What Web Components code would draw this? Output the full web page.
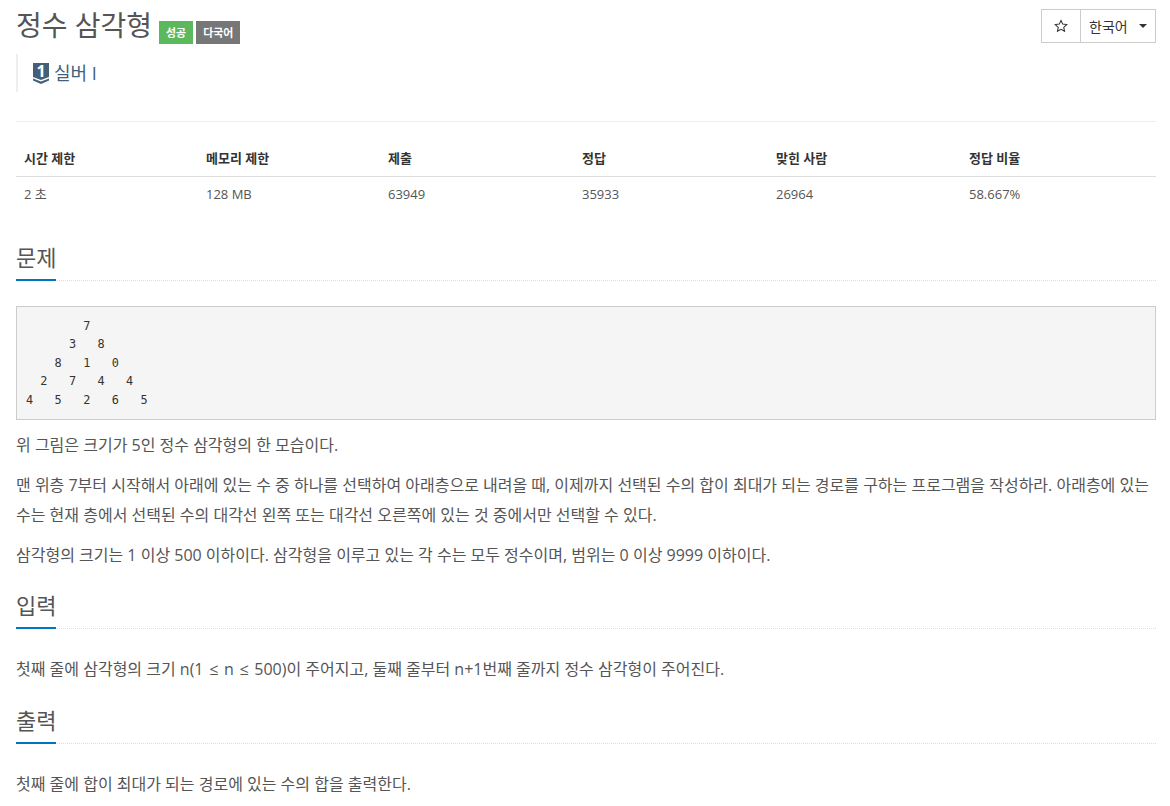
<!DOCTYPE html>
<html lang="ko">
<head>
<meta charset="utf-8">
<title>정수 삼각형</title>
<style>
html, body { margin: 0; background: #fff; }
body { font-family: "Open Sans", "Noto Sans CJK KR", sans-serif; color: #555; font-size: 14px; overflow: hidden; }
main { display: block; padding: 0 14px 0 16px; }
.expr { word-spacing: 1.5px; }
</style>
</head>
<body>
<main>
    <problem-header title-text="정수 삼각형" tier="실버 I"></problem-header>
    <stat-table></stat-table>
    <problem-section heading="문제">
        <triangle-box></triangle-box>
        <p>위 그림은 크기가 5인 정수 삼각형의 한 모습이다.</p>
        <p>맨 위층 7부터 시작해서 아래에 있는 수 중 하나를 선택하여 아래층으로 내려올 때, 이제까지 선택된 수의 합이 최대가 되는 경로를 구하는 프로그램을 작성하라. 아래층에 있는 수는 현재 층에서 선택된 수의 대각선 왼쪽 또는 대각선 오른쪽에 있는 것 중에서만 선택할 수 있다.</p>
        <p>삼각형의 크기는 1 이상 500 이하이다. 삼각형을 이루고 있는 각 수는 모두 정수이며, 범위는 0 이상 9999 이하이다.</p>
    </problem-section>
    <problem-section heading="입력">
        <p>첫째 줄에 삼각형의 크기 <span class="expr">n(1 ≤ n ≤ 500)</span>이 주어지고, 둘째 줄부터 n+1번째 줄까지 정수 삼각형이 주어진다.</p>
    </problem-section>
    <problem-section heading="출력">
        <p>첫째 줄에 합이 최대가 되는 경로에 있는 수의 합을 출력한다.</p>
    </problem-section>
</main>

<script>
class ProblemHeader extends HTMLElement {
    constructor() {
        super();
        this.sr = this.attachShadow({ mode: "open" });
    }

    connectedCallback() {
        this.sr.innerHTML = `<style>
:host { display: block; border-bottom: 1px solid #eee; height: 121px; }
.top { display: flex; justify-content: space-between; align-items: flex-start; height: 54px; }
.title { display: flex; align-items: flex-start; gap: 7px; padding-top: 7px; }
h1 { margin: 0; font-size: 28px; line-height: 36px; font-weight: 400; color: #555; }
.labels { display: flex; gap: 3px; padding-top: 14px; }
.tier { display: flex; align-items: center; gap: 5px; height: 38px; border-left: 2px solid #eee; padding-left: 15px; font-size: 18px; line-height: 36px; color: #435f7a; }
</style>
<div class="top">
    <div class="title"><h1>${this.getAttribute("title-text")}</h1>
        <div class="labels"><state-label kind="ok">성공</state-label><state-label>다국어</state-label></div>
    </div>
    <lang-select></lang-select>
</div>
<div class="tier"><tier-badge></tier-badge><span>${this.getAttribute("tier")}</span></div>`;
    }
}

class StateLabel extends HTMLElement {
    constructor() {
        super();
        this.sr = this.attachShadow({ mode: "open" });
        this.sr.innerHTML = `<style>
:host { display: block; background: #777; color: #fff; font-size: 10.9px; font-weight: 700; line-height: 23px; height: 23px; padding: 0 7px; }
:host([kind="ok"]) { background: #5cb85c; }
</style><slot></slot>`;
    }
}

class TierBadge extends HTMLElement {
    constructor() {
        super();
        this.sr = this.attachShadow({ mode: "open" });
        this.sr.innerHTML = `<style>
:host { display: block; width: 16px; height: 21px; position: relative; }
svg { display: block; }
span { position: absolute; left: 0; right: 0; top: 0; height: 16px; text-align: center; font: 700 16px/16px "Open Sans", sans-serif; color: #fff; }
</style>
<svg width="16" height="21" viewBox="0 0 16 21">
    <path d="M0 0H16V14L8 17L0 14Z" fill="#435f7a"/>
    <path d="M0 15.5L8 18.5L16 15.5V17.5L8 21L0 17.5Z" fill="#435f7a"/>
</svg>
<span>1</span>`;
    }
}

class LangSelect extends HTMLElement {
    constructor() {
        super();
        this.sr = this.attachShadow({ mode: "open" });
        this.sr.innerHTML = `<style>
:host { display: flex; height: 32px; margin-top: 9px; border: 1px solid #ccc; color: #333; font-size: 14px; }
.star { width: 38px; border-right: 1px solid #ccc; display: flex; align-items: center; justify-content: center; }
.lang { width: 74px; display: flex; align-items: center; justify-content: space-between; padding: 0 8px; box-sizing: border-box; }
.caret { width: 0; height: 0; border-top: 4px solid #333; border-left: 4px solid transparent; border-right: 4px solid transparent; }
</style>
<div class="star">
    <svg width="14" height="14" viewBox="0 0 24 24" fill="none" stroke="#333" stroke-width="1.8"><path d="M12 2.5l2.9 6.3 6.9.8-5.1 4.7 1.4 6.8-6.1-3.4-6.1 3.4 1.4-6.8-5.1-4.7 6.9-.8z"/></svg>
</div>
<div class="lang"><span>한국어</span><span class="caret"></span></div>`;
    }
}

class StatTable extends HTMLElement {
    constructor() {
        super();
        this.sr = this.attachShadow({ mode: "open" });
        this.cols = [
            ["시간 제한", "2 초"],
            ["메모리 제한", "128 MB"],
            ["제출", "63949"],
            ["정답", "35933"],
            ["맞힌 사람", "26964"],
            ["정답 비율", "58.667%"],
        ];
    }

    connectedCallback() {
        const head = this.cols.map(c => `<div class="th">${c[0]}</div>`).join("");
        const body = this.cols.map(c => `<div class="td">${c[1]}</div>`).join("");
        this.sr.innerHTML = `<style>
:host { display: block; margin-top: 20px; margin-bottom: 22px; }
.grid { display: grid; grid-template-columns: 182px 182px 194px 194px 193px 195px; }
.th { font-size: 13px; font-weight: 700; color: #333; padding: 7px 8px 9px; line-height: 18px; height: 18px; border-bottom: 1px solid #ddd; }
.td { font-size: 13px; color: #555; padding: 8px; line-height: 19px; }
</style><div class="grid">${head}${body}</div>`;
    }
}

class ProblemSection extends HTMLElement {
    constructor() {
        super();
        this.sr = this.attachShadow({ mode: "open" });
    }

    connectedCallback() {
        this.sr.innerHTML = `<style>
:host { display: block; margin-top: 12.5px; }
.head { position: relative; border-bottom: 1px dotted #ddd; height: 46px; margin-bottom: 25px; }
h2 { margin: 0; font-size: 22px; line-height: 46px; font-weight: 400; color: #555; }
.head::after { content: ""; position: absolute; left: 0; bottom: -1px; width: 40px; height: 2px; background: #0076c0; }
::slotted(p) { margin: 0 0 10px; font-size: 16px; line-height: 30px; color: #555; }
</style>
<div class="head"><h2>${this.getAttribute("heading")}</h2></div>
<slot></slot>`;
    }
}

class TriangleBox extends HTMLElement {
    constructor() {
        super();
        this.sr = this.attachShadow({ mode: "open" });
        this.sr.innerHTML = `<style>
:host { display: block; margin-bottom: 10px; }
pre { margin: 0; padding: 9.5px 9px; border: 1px solid #ccc; background: #f5f5f5; color: #333; font: 11.88px/18.57px "DejaVu Sans Mono", monospace; }
</style>
<pre>        7
      3   8
    8   1   0
  2   7   4   4
4   5   2   6   5</pre>`;
    }
}

customElements.define("problem-header", ProblemHeader);
customElements.define("state-label", StateLabel);
customElements.define("tier-badge", TierBadge);
customElements.define("lang-select", LangSelect);
customElements.define("stat-table", StatTable);
customElements.define("problem-section", ProblemSection);
customElements.define("triangle-box", TriangleBox);
</script>
</body>
</html>
